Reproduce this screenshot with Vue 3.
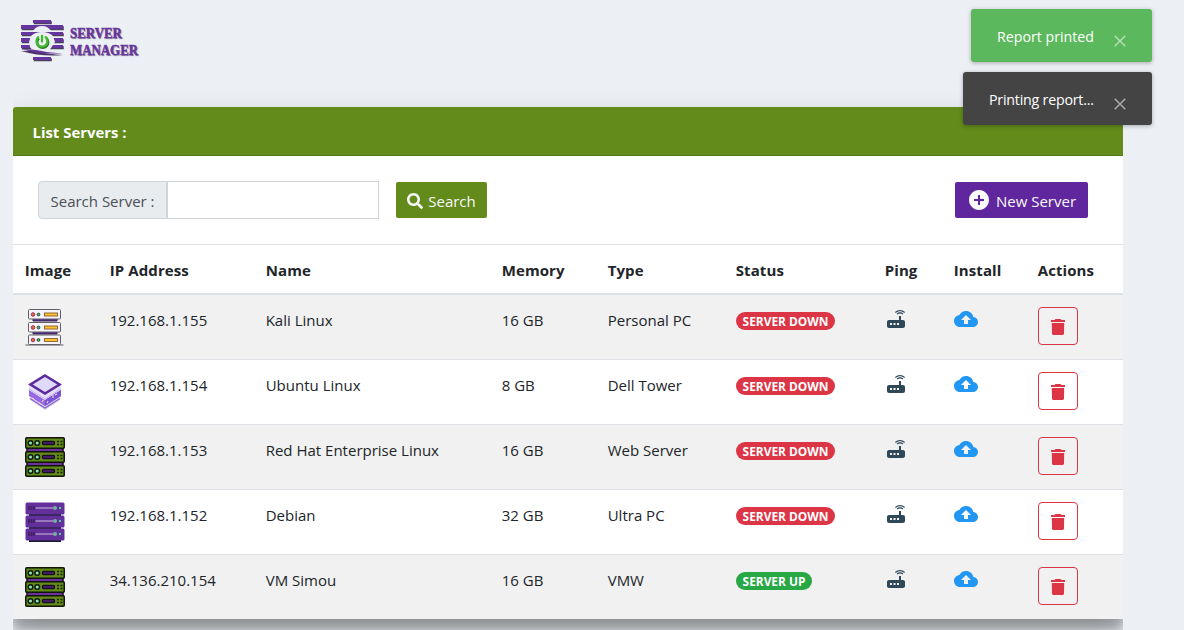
<script setup>
const columns = ['Image', 'IP Address', 'Name', 'Memory', 'Type', 'Status', 'Ping', 'Install', 'Actions']
const servers = [
  { image: 'light', ip: '192.168.1.155', name: 'Kali Linux', memory: '16 GB', type: 'Personal PC', up: false },
  { image: 'stack', ip: '192.168.1.154', name: 'Ubuntu Linux', memory: '8 GB', type: 'Dell Tower', up: false },
  { image: 'green', ip: '192.168.1.153', name: 'Red Hat Enterprise Linux', memory: '16 GB', type: 'Web Server', up: false },
  { image: 'purple', ip: '192.168.1.152', name: 'Debian', memory: '32 GB', type: 'Ultra PC', up: false },
  { image: 'green', ip: '34.136.210.154', name: 'VM Simou', memory: '16 GB', type: 'VMW', up: true }
]
const units = [0, 14, 28]
</script>

<template>
  <div class="page">
    <header class="brand">
      <svg class="logo" width="46" height="44" viewBox="0 0 46 44">
        <g class="logo-shade" transform="translate(.8 1.300)">
          <path d="M14 1h18v3H14zM2 6h42v4H2zM2 13h42v3H2zM2 19h42v4H2zM2 26h42v3H2zM14 38h18v3H14z" />
        </g>
        <path fill="#6735a0" d="M14 1h18v3H14zM2 6h42v4H2zM2 13h42v3H2zM2 19h42v4H2zM2 26h42v3H2zM14 38h18v3H14z" />
        <path fill="#ecf0f5" d="M14 12Q17 7 23 7T32 12zM12 17Q16 13 23 13T34 17L36 23 32 29 29 33H15L11 28 10 23z" />
        <path fill="#4b3566" d="M2 32Q15 31 22 33T44 36Q23 38 2 32z" />
        <path fill="#6735a0" d="M2 30Q14 30 23 32T44 34Q25 36 2 30z" />
        <path fill="none" stroke="#277e25" stroke-width="2.600" d="M19.500 18.500a5.500 5.500 0 1 0 7.500 0" transform="translate(.4 .8)" />
        <path fill="none" stroke="#42b82e" stroke-width="2.300" stroke-linecap="round" d="M19.200 18.200a5.500 5.500 0 1 0 7.500 0M23 17v5.500" />
      </svg>
      <div class="brand-name"><span>SERVER</span><span>MANAGER</span></div>
    </header>

    <main class="card">
      <div class="card-header">List Servers :</div>
      <div class="toolbar">
        <label class="search-label" for="search">Search Server :</label>
        <input id="search" class="search-input" type="text">
        <button class="btn search-btn">
          <svg width="16" height="16" viewBox="0 0 512 512"><path fill="currentColor" d="M505 442.700 405.300 343c-4.500-4.500-10.600-7-17-7H372c27.600-35.300 44-79.700 44-128C416 93.100 322.900 0 208 0S0 93.100 0 208s93.100 208 208 208c48.300 0 92.700-16.400 128-44v16.300c0 6.400 2.500 12.500 7 17l99.700 99.700c9.400 9.400 24.600 9.400 33.900 0l28.300-28.300c9.400-9.400 9.400-24.600.1-34zM208 336c-70.700 0-128-57.200-128-128 0-70.700 57.200-128 128-128 70.700 0 128 57.200 128 128 0 70.700-57.200 128-128 128z" /></svg>
          <span>Search</span>
        </button>
        <button class="btn new-btn">
          <svg width="24" height="24" viewBox="0 0 24 24"><path fill="currentColor" d="M12 2C6.480 2 2 6.480 2 12s4.480 10 10 10 10-4.480 10-10S17.520 2 12 2zm5 11h-4v4h-2v-4H7v-2h4V7h2v4h4v2z" /></svg>
          <span>New Server</span>
        </button>
      </div>

      <div class="row head">
        <div v-for="c in columns" :key="c" class="cell">{{ c }}</div>
      </div>
      <div v-for="(s, n) in servers" :key="s.ip" class="row" :class="{ striped: n % 2 === 0 }">
        <div class="cell picture">
          <svg width="40" height="40" viewBox="0 0 40 40">
            <g v-if="s.image === 'light'">
              <path d="M8 12h24v3H8zM8 25h24v3H8z" fill="#5b2a9b" stroke="#34284d" />
              <g v-for="(y, i) in [3.5, 16.500, 29]" :key="i" :transform="`translate(0 ${y})`">
                <rect x="3.500" width="32" height="9.500" rx="1" fill="#f6f3fc" stroke="#606166" />
                <circle cx="8" cy="5" r="1.800" fill="#ed6255" stroke="#923c43" />
                <circle cx="13.500" cy="5" r="1.400" fill="#5bb36a" stroke="#264e38" />
                <rect x="19.500" y="3.500" width="13" height="3" fill="#ffc02d" stroke="#916b37" />
              </g>
              <path d="M.5 39h38" stroke="#606166" stroke-width="1.200" />
            </g>
            <g v-else-if="s.image === 'stack'">
              <path d="M5 25v3l15 10 15-10v-3L20 34z" fill="#d8cef6" />
              <path d="M5 26.500l15 9.500 15-9.500" fill="none" stroke="#8a66c4" stroke-width="1.200" />
              <path d="M4 18v6l16 10 16-10v-6L20 28z" fill="#9568e6" />
              <path d="M20 28l16-10v6L20 34z" fill="#7854d8" />
              <path d="M4 12v5l16 10 16-10v-5L20 22z" fill="#e5defa" />
              <path d="M4 17l16 10 16-10" fill="none" stroke="#c1afee" />
              <path d="M20 3.500 34.500 12.500 20 21.500 5.500 12.500z" fill="#dfdafa" stroke="#5d2b9c" stroke-width="2.600" />
              <path d="M17 30l1.500-2M22 31l1-2M30 23l2-1M28 26v-3M7 26l2 1M14 31l2 1" stroke="#f8cbb5" stroke-width="1.200" />
            </g>
            <g v-else-if="s.image === 'green'">
              <path d="M2 10h36v6H2zM2 24h36v6H2z" fill="#6a329f" stroke="#11110c" stroke-width="1.500" />
              <g v-for="y in units" :key="y" :transform="`translate(0 ${y})`">
                <rect x=".75" y=".75" width="38.500" height="10.500" rx="1" fill="#628b18" stroke="#11150b" stroke-width="1.500" />
                <circle cx="5.500" cy="6" r="2.300" fill="#8ee7aa" stroke="#101812" stroke-width="1.500" />
                <circle cx="12.200" cy="6" r="2.300" fill="#8ee7aa" stroke="#101812" stroke-width="1.500" />
                <rect x="17.500" y="4.500" width="12" height="3" rx="1" fill="#512379" stroke="#171020" stroke-width="1.300" />
                <path d="M32 4.500h2m1.500 0h2M32 7.500h2m1.500 0h2" stroke="#182109" stroke-width="1.300" />
              </g>
            </g>
            <g v-else>
              <path d="M4 10h32v6H4zM4 24h32v6H4zM4 36h32v4H4z" fill="#171b2b" />
              <g v-for="(y, i) in [0, 13, 26]" :key="i" :transform="`translate(0 ${y})`">
                <rect x=".5" y=".5" width="39" height="12" rx="1.500" fill="#63309b" />
                <path d="M4 4v4M6.500 4v4M9 4v4" stroke="#462067" stroke-width="1.800" />
                <path d="M10.500 6H28" stroke="#9878bd" stroke-width="2" />
                <circle cx="30" cy="6" r="2" fill="#78af9c" />
                <rect x="34" y="5" width="2" height="2" fill="#4ed0a0" />
              </g>
            </g>
          </svg>
        </div>
        <div class="cell">{{ s.ip }}</div>
        <div class="cell">{{ s.name }}</div>
        <div class="cell">{{ s.memory }}</div>
        <div class="cell">{{ s.type }}</div>
        <div class="cell status"><span class="badge" :class="{ up: s.up }">{{ s.up ? 'SERVER UP' : 'SERVER DOWN' }}</span></div>
        <div class="cell ping">
          <svg width="24" height="24" viewBox="0 0 24 24"><path fill="#2f4858" d="m20.200 5.900.8-.8C19.600 3.700 17.800 3 16 3s-3.600.7-5 2.100l.8.8C13 4.800 14.500 4.200 16 4.200s3 .6 4.200 1.700zm-.9.8c-.9-.9-2.100-1.400-3.300-1.400s-2.400.5-3.300 1.400l.8.8c.7-.7 1.600-1 2.500-1s1.800.3 2.500 1l.8-.8zM19 13h-2V9h-2v4H5c-1.100 0-2 .9-2 2v4c0 1.100.9 2 2 2h14c1.100 0 2-.9 2-2v-4c0-1.100-.9-2-2-2zM8 18H6v-2h2v2zm3.500 0h-2v-2h2v2zm3.500 0h-2v-2h2v2z" /></svg>
        </div>
        <div class="cell install">
          <svg width="24" height="24" viewBox="0 0 24 24"><path fill="#2196f3" d="M19.350 10.040C18.670 6.590 15.640 4 12 4 9.110 4 6.600 5.640 5.350 8.040 2.340 8.360 0 10.910 0 14c0 3.310 2.690 6 6 6h13c2.760 0 5-2.240 5-5 0-2.640-2.050-4.780-4.650-4.960zM14 13v4h-4v-4H7l5-5 5 5h-3z" /></svg>
        </div>
        <div class="cell action">
          <button class="delete-btn" aria-label="Delete">
            <svg width="24" height="24" viewBox="0 0 24 24"><path fill="currentColor" d="M6 17.500c0 .8.700 1.500 1.500 1.500h9c.8 0 1.500-.7 1.500-1.500L18.200 7H5.800zM19 4h-3.500l-1-1h-5l-1 1H5v2h14V4z" /></svg>
          </button>
        </div>
      </div>
    </main>

    <aside class="toasts">
      <div class="toast success"><span>Report printed</span><svg width="12" height="12" viewBox="0 0 12 12"><path d="M.7.7l10.600 10.600M11.300.7.7 11.300" /></svg></div>
      <div class="toast"><span class="progress">Printing report...</span><svg width="12" height="12" viewBox="0 0 12 12"><path d="M.7.7l10.600 10.600M11.300.7.7 11.300" /></svg></div>
    </aside>
  </div>
</template>

<style>
body { background: #ecf0f5; }
</style>

<style scoped>
* { box-sizing: border-box; }
.page {
  height: 630px;
  overflow: hidden;
  position: relative;
  padding-left: 13px;
  background: #ecf0f5;
  color: #212529;
  font: 15px/24px "Open Sans", "Noto Sans", sans-serif;
}
svg { display: block; flex: none; }
.brand { height: 107px; padding: 18.500px 0 0 5.500px; display: flex; }
.logo-shade { fill: #49415b; }
.brand-name {
  display: flex;
  flex-direction: column;
  padding: 6px 0 0 5px;
  font: bold 15px/17px "Liberation Serif", serif;
  color: #6735a0;
  text-shadow: 1px 1px 1px #77718a;
  -webkit-text-stroke: .4px #6735a0;
}
.brand-name span { transform: scaleX(.86); transform-origin: left; white-space: nowrap; }
.card {
  width: 1110px;
  height: 512px;
  background: #fff;
  border-radius: 4px 4px 0 0;
  box-shadow: 0 14px 28px rgba(0, 0, 0, .25), 0 10px 10px rgba(0, 0, 0, .22);
  clip-path: inset(-30px 0 -50px 0);
}
.card-header {
  height: 49px;
  padding: 13px 19.500px 0;
  border-radius: 3px 0 0;
  border-bottom: 1px solid #567a17;
  background: #638b1b;
  color: #fff;
  font-size: 14.900px;
  font-weight: 700;
}
.toolbar { height: 88px; padding: 25px 35px 0 25px; display: flex; align-items: flex-start; }
.search-label {
  width: 129px;
  height: 38px;
  padding: 7px 11.500px;
  border: 1px solid #ced4da;
  border-radius: 4px 0 0 4px;
  background: #e9ecef;
  color: #495057;
  white-space: nowrap;
}
.search-input { width: 212px; height: 38px; border: 1px solid #ced4da; background: #fff; padding: 0 12px; }
.btn {
  height: 36px;
  margin-top: 1px;
  border: 0;
  border-radius: 2px;
  padding: 2px 0 0;
  display: flex;
  align-items: center;
  justify-content: center;
  color: #f8f9fa;
  font: inherit;
  white-space: nowrap;
}
.search-btn { width: 91px; margin-left: 17px; background: #638b1b; gap: 5px; }
.new-btn { width: 133px; margin-left: auto; background: #60269e; gap: 5px; }
.new-btn svg { margin-top: -2px; }
.row {
  display: grid;
  grid-template-columns: 85px 156px 236px 106px 128px 149px 69px 84px 97px;
  height: 65px;
  border-top: 1px solid #dee2e6;
}
.row.striped { background: #f1f1f1; }
.row.head {
  height: 51px;
  border-bottom: 2px solid #dee2e6;
  font-weight: 700;
}
.head + .row { height: 64px; border-top: 0; }
.cell { padding: 13px 11.700px 0; white-space: nowrap; }
.head .cell { letter-spacing: .1px; }
.cell.picture { padding: 12px 12px 0; }
.head + .row .cell.picture { padding-top: 11px; }
.cell.status { padding: 17px 12px 0; }
.cell.ping { padding: 12px 11px 0; }
.cell.install { padding: 12px 12px 0; }
.cell.action { padding: 12px 12px 0; }
.badge {
  display: block;
  width: 99px;
  height: 18px;
  border-radius: 9px;
  background: #dc3545;
  color: #fff;
  font-size: 11.900px;
  font-weight: 700;
  line-height: 19px;
  text-align: center;
}
.badge.up { width: 76px; background: #28a745; }
.delete-btn {
  width: 40px;
  height: 38px;
  padding: 3px 0 0;
  border: 1px solid #dc3545;
  border-radius: 4px;
  background: transparent;
  color: #dc3545;
  display: grid;
  place-items: center;
}
.toasts {
  position: absolute;
  top: 9px;
  right: 32px;
  display: flex;
  flex-direction: column;
  align-items: flex-end;
  gap: 10px;
}
.toast {
  width: 189px;
  height: 53px;
  padding: 3px 26px 0;
  border-radius: 3px;
  background: #444;
  color: #fff;
  box-shadow: 0 1px 4px rgba(0, 0, 0, .3);
  display: flex;
  align-items: center;
  justify-content: space-between;
  font-size: 14.200px;
  white-space: nowrap;
}
.progress { letter-spacing: -.2px; }
.toast.success { width: 181px; background: #5cb85c; }
.toast svg { margin-top: 8px; }
.toast path { stroke: #fff; stroke-opacity: .55; stroke-width: 1.500; }
</style>
